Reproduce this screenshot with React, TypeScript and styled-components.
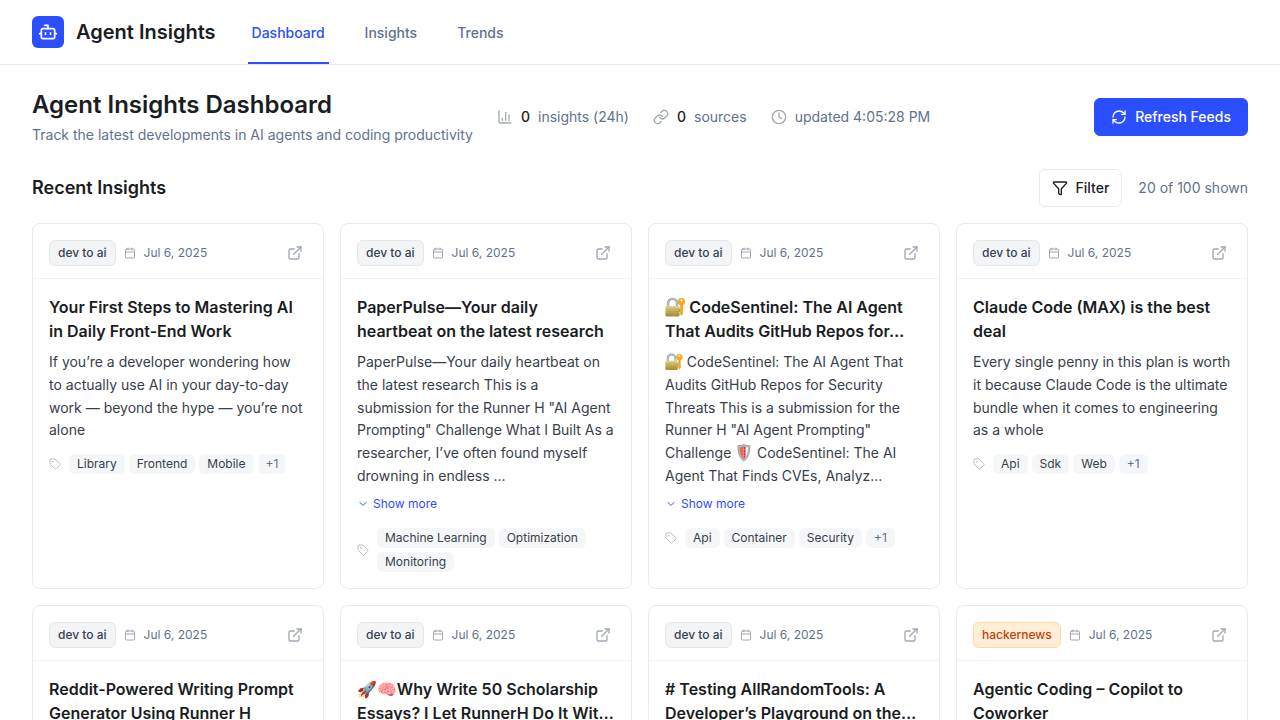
import React from 'react';
import styled, { createGlobalStyle } from 'styled-components';
import {
  Bot,
  Calendar,
  ChartColumn,
  ChevronDown,
  Clock,
  ExternalLink,
  Funnel,
  Link,
  RefreshCw,
  Tag,
} from 'lucide-react';

const GlobalStyle = createGlobalStyle`
  *, *::before, *::after { box-sizing: border-box; }
  html { overflow: hidden; }
  body {
    margin: 0;
    background: #fff;
    color: #1a1d23;
    font-family: Inter, "Liberation Sans", "Noto Color Emoji", sans-serif;
    font-size: 14px;
    line-height: 20px;
    -webkit-font-smoothing: antialiased;
  }
  h1, h2, h3, p { margin: 0; }
  button { font: inherit; cursor: pointer; }
  svg { flex-shrink: 0; }
`;

const Page = styled.div`
  height: 720px;
  overflow: hidden;
`;

const TopBar = styled.header`
  display: flex;
  align-items: center;
  gap: 32px;
  height: 65px;
  padding: 0 32px;
  border-bottom: 1px solid #e5e7eb;
`;

const Brand = styled.div`
  display: flex;
  align-items: center;
  gap: 12px;
  font-size: 20px;
  line-height: 28px;
  font-weight: 600;
`;

const BrandMark = styled.div`
  display: flex;
  align-items: center;
  justify-content: center;
  width: 32px;
  height: 32px;
  border-radius: 6px;
  background: #2b4eff;
  color: #fff;
`;

const Nav = styled.nav`
  display: flex;
  gap: 32px;
  height: 64px;
`;

const NavItem = styled.a<{ $active?: boolean }>`
  display: flex;
  align-items: center;
  padding: 4px 4px 0;
  border-bottom: 2px solid ${(p) => (p.$active ? '#2b4eff' : 'transparent')};
  color: ${(p) => (p.$active ? '#2b4eff' : '#62718f')};
  font-weight: 500;
`;

const Main = styled.main`
  padding: 24px 32px;
`;

const Row = styled.div`
  display: flex;
  align-items: center;
  justify-content: space-between;
`;

const Intro = styled.div`
  display: flex;
  align-items: center;
  gap: 24px;
`;

const PageTitle = styled.h1`
  font-size: 24px;
  line-height: 32px;
  font-weight: 600;
`;

const Subtitle = styled.p`
  margin-top: 4px;
  color: #62718f;
`;

const Stats = styled.div`
  display: flex;
  gap: 24px;
`;

const Stat = styled.div`
  display: flex;
  align-items: center;
  gap: 8px;
  color: #62718f;

  svg { color: #a1a7b5; }
  strong { color: #1a1d23; font-weight: 500; }
`;

const Button = styled.button<{ $primary?: boolean }>`
  display: flex;
  align-items: center;
  gap: 8px;
  height: 38px;
  padding: 0 ${(p) => (p.$primary ? 16 : 12)}px;
  border: 1px solid ${(p) => (p.$primary ? '#2b4eff' : '#e8eaee')};
  border-radius: 6px;
  background: ${(p) => (p.$primary ? '#2b4eff' : '#fff')};
  color: ${(p) => (p.$primary ? '#fff' : '#1a1d23')};
  font-weight: 500;
`;

const SectionHead = styled(Row)`
  margin: 24px 0 16px;
`;

const SectionTitle = styled.h2`
  font-size: 18px;
  line-height: 28px;
  font-weight: 600;
`;

const SectionTools = styled.div`
  display: flex;
  align-items: center;
  gap: 16px;
  color: #62718f;
`;

const Grid = styled.div`
  display: grid;
  grid-template-columns: repeat(4, minmax(0, 1fr));
  gap: 16px;
`;

const Card = styled.article`
  border: 1px solid #e8eaee;
  border-radius: 8px;
  background: #fff;
`;

const CardHead = styled(Row)`
  padding: 16px 16px 12px;
  border-bottom: 1px solid #f1f3f6;
`;

const CardMeta = styled.div`
  display: flex;
  align-items: center;
  gap: 8px;
  font-size: 12px;
  line-height: 16px;
  color: #62718f;

  svg { color: #a1a7b5; }
`;

const Source = styled.span<{ $hot?: boolean }>`
  padding: 4px 8px;
  border: 1px solid ${(p) => (p.$hot ? '#fed7aa' : '#e5e7eb')};
  border-radius: 6px;
  background: ${(p) => (p.$hot ? '#ffedd5' : '#f3f4f6')};
  color: ${(p) => (p.$hot ? '#c2410c' : '#374151')};
  font-weight: 500;
`;

const OpenLink = styled.a`
  display: flex;
  padding: 4px;
  color: #a1a7b5;
`;

const CardBody = styled.div`
  padding: 16px;
`;

const CardTitle = styled.h3`
  font-size: 16px;
  line-height: 24px;
  font-weight: 600;
`;

const Pictograph = styled.svg`
  display: inline-block;
  width: 1.27em;
  height: 1.27em;
  margin: -0.2em 0;
  vertical-align: -0.1em;
`;

const Summary = styled.p`
  margin-top: 8px;
  line-height: 22.75px;
  color: #383e4b;
`;

const MoreButton = styled.button`
  display: flex;
  align-items: center;
  gap: 4px;
  margin-top: 4px;
  padding: 4px 0;
  border: 0;
  background: none;
  color: #2b4eff;
  font-size: 12px;
  line-height: 16px;
  font-weight: 400;
`;

const TagRow = styled.div`
  display: flex;
  align-items: center;
  gap: 8px;
  margin-top: 12px;
  color: #a1a7b5;
`;

const Chips = styled.div`
  display: flex;
  flex-wrap: wrap;
  gap: 4px;
`;

const Chip = styled.span<{ $muted?: boolean }>`
  padding: 2px 8px;
  border-radius: 6px;
  background: #f4f6f8;
  color: ${(p) => (p.$muted ? '#62718f' : '#383e4b')};
  font-size: 12px;
  line-height: 16px;
`;

interface Insight {
  source: string;
  title: string;
  summary: string;
  tags: string[];
  extra?: number;
  expandable?: boolean;
}

const insights: Insight[] = [
  {
    source: 'dev to ai',
    title: 'Your First Steps to Mastering AI in Daily Front-End Work',
    summary:
      'If you’re a developer wondering how to actually use AI in your day-to-day work — beyond the hype — you’re not alone',
    tags: ['Library', 'Frontend', 'Mobile'],
    extra: 1,
  },
  {
    source: 'dev to ai',
    title: 'PaperPulse—Your daily heartbeat on the latest research',
    summary:
      'PaperPulse—Your daily heartbeat on the latest research This is a submission for the Runner H "AI Agent Prompting" Challenge What I Built As a researcher, I’ve often found myself drowning in endless ...',
    tags: ['Machine Learning', 'Optimization', 'Monitoring'],
    expandable: true,
  },
  {
    source: 'dev to ai',
    title: '🔐 CodeSentinel: The AI Agent That Audits GitHub Repos for…',
    summary:
      '🔐 CodeSentinel: The AI Agent That Audits GitHub Repos for Security Threats This is a submission for the Runner H "AI Agent Prompting" Challenge 🛡️ CodeSentinel: The AI Agent That Finds CVEs, Analyz...',
    tags: ['Api', 'Container', 'Security'],
    extra: 1,
    expandable: true,
  },
  {
    source: 'dev to ai',
    title: 'Claude Code (MAX) is the best deal',
    summary:
      'Every single penny in this plan is worth it because Claude Code is the ultimate bundle when it comes to engineering as a whole',
    tags: ['Api', 'Sdk', 'Web'],
    extra: 1,
  },
  { source: 'dev to ai', title: 'Reddit-Powered Writing Prompt Generator Using Runner H', summary: '', tags: [] },
  { source: 'dev to ai', title: '🚀🧠Why Write 50 Scholarship Essays? I Let RunnerH Do It Wit…', summary: '', tags: [] },
  { source: 'dev to ai', title: '# Testing AllRandomTools: A Developer’s Playground on the…', summary: '', tags: [] },
  { source: 'hackernews', title: 'Agentic Coding – Copilot to Coworker', summary: '', tags: [] },
];

function LockWithKey() {
  return (
    <Pictograph viewBox="0 0 20 20" role="img" aria-label="locked with key">
      <defs>
        <linearGradient id="lock-body" x1="0" y1="0" x2="0" y2="1">
          <stop offset="0" stopColor="#e3d48a" />
          <stop offset="0.5" stopColor="#c4b35c" />
          <stop offset="1" stopColor="#a08c35" />
        </linearGradient>
      </defs>
      <path d="M3 10V6.2a4.4 4.4 0 0 1 8.8 0V10" fill="none" stroke="#8d9aa8" strokeWidth="2.2" />
      <path d="M3 10V6.2a4.4 4.4 0 0 1 8.8 0V10" fill="none" stroke="#c6d0d9" strokeWidth="0.9" />
      <rect x="0.4" y="8.8" width="14" height="10.4" rx="1.4" fill="url(#lock-body)" />
      <path d="M1 12h12.8M1 14.4h12.8M1 16.8h12.8" stroke="#927f35" strokeWidth="0.45" opacity="0.6" />
      <path d="M15 7h2.6v9.6l-1.3 1.9-1.3-1.5z" fill="#eda51c" />
      <path d="M15 11.2l-1.3.9v2.2l1.3.7z" fill="#d88d10" />
      <circle cx="16.2" cy="4.6" r="3.6" fill="#f2ac20" />
      <circle cx="16.2" cy="3.4" r="1.05" fill="#fff" />
    </Pictograph>
  );
}

function Shield() {
  return (
    <Pictograph viewBox="0 0 20 20" role="img" aria-label="shield">
      <path
        d="M10 .6c2 .9 4.100 1.300 6.600 1.200.5 7.400-1.300 13.700-6.600 17.600C4.700 15.500 2.900 9.200 3.400 1.800 5.900 1.900 8 1.500 10 .6z"
        fill="#b4b8bc"
        stroke="#777c82"
        strokeWidth="0.6"
      />
      <path d="M10 2.700c-1.500.700-3 1-4.700 1.100-.1 5.500 1.300 10.100 4.700 13.200z" fill="#ee6654" />
      <path d="M10 2.700c1.500.700 3 1 4.700 1.100.1 5.500-1.300 10.100-4.700 13.200z" fill="#f0f0f0" />
      <path d="M10 2.700c.6.300 1.200.5 1.800.7v10.900c-.5 1-1.100 1.900-1.800 2.700z" fill="#c9382f" />
      <path d="M10 5.500v1.500M10 9v1.500M10 12.500V14" stroke="#f3cfc7" strokeWidth="0.9" />
    </Pictograph>
  );
}

/* Swaps the padlock and shield characters for their drawings. */
function withPictographs(text: string) {
  return text.split(/(🔐|🛡️)/u).map((part, i) => {
    if (part === '🔐') return <LockWithKey key={i} />;
    if (part === '🛡️') return <Shield key={i} />;
    return part;
  });
}

function InsightCard({ item }: { item: Insight }) {
  return (
    <Card>
      <CardHead>
        <CardMeta>
          <Source $hot={item.source === 'hackernews'}>{item.source}</Source>
          <Calendar size={12} />
          <span>Jul 6, 2025</span>
        </CardMeta>
        <OpenLink>
          <ExternalLink size={16} />
        </OpenLink>
      </CardHead>
      <CardBody>
        <CardTitle>{withPictographs(item.title)}</CardTitle>
        {item.summary && <Summary>{withPictographs(item.summary)}</Summary>}
        {item.expandable && (
          <MoreButton>
            <ChevronDown size={12} />
            Show more
          </MoreButton>
        )}
        {item.tags.length > 0 && (
          <TagRow>
            <Tag size={12} strokeWidth={1.5} />
            <Chips>
              {item.tags.map((tag) => (
                <Chip key={tag}>{tag}</Chip>
              ))}
              {item.extra && <Chip $muted>+{item.extra}</Chip>}
            </Chips>
          </TagRow>
        )}
      </CardBody>
    </Card>
  );
}

export default function App() {
  return (
    <Page>
      <GlobalStyle />
      <TopBar>
        <Brand>
          <BrandMark>
            <Bot size={20} />
          </BrandMark>
          Agent Insights
        </Brand>
        <Nav>
          <NavItem $active>Dashboard</NavItem>
          <NavItem>Insights</NavItem>
          <NavItem>Trends</NavItem>
        </Nav>
      </TopBar>
      <Main>
        <Row>
          <Intro>
            <div>
              <PageTitle>Agent Insights Dashboard</PageTitle>
              <Subtitle>Track the latest developments in AI agents and coding productivity</Subtitle>
            </div>
            <Stats>
              <Stat>
                <ChartColumn size={16} />
                <strong>0</strong>
                <span>insights (24h)</span>
              </Stat>
              <Stat>
                <Link size={16} />
                <strong>0</strong>
                <span>sources</span>
              </Stat>
              <Stat>
                <Clock size={16} />
                <span>updated 4:05:28 PM</span>
              </Stat>
            </Stats>
          </Intro>
          <Button $primary>
            <RefreshCw size={16} />
            Refresh Feeds
          </Button>
        </Row>
        <SectionHead>
          <SectionTitle>Recent Insights</SectionTitle>
          <SectionTools>
            <Button>
              <Funnel size={16} />
              Filter
            </Button>
            <span>20 of 100 shown</span>
          </SectionTools>
        </SectionHead>
        <Grid>
          {insights.map((item) => (
            <InsightCard key={item.title} item={item} />
          ))}
        </Grid>
      </Main>
    </Page>
  );
}
